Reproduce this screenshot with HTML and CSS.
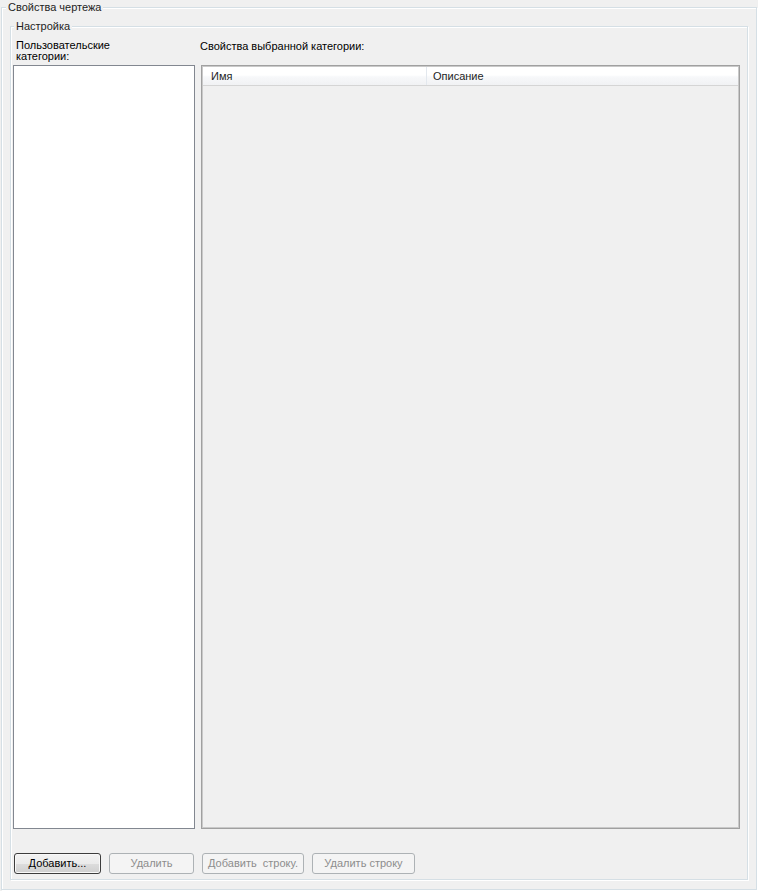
FILE: index.html
```html
<!DOCTYPE html>
<html lang="ru">
<head>
  <meta charset="UTF-8">
  <title>Свойства чертежа</title>
  <link rel="stylesheet" href="styles.css">
</head>
<body>

<fieldset class="group group-outer">
  <legend>Свойства чертежа</legend>

  <fieldset class="group group-inner">
    <legend>Настройка</legend>

    <div class="label label-categories">Пользовательские<br>категории:</div>
    <div class="label label-props">Свойства выбранной категории:</div>

    <div class="listbox"></div>

    <div class="listview">
      <div class="lv-header">
        <div class="lv-col lv-col-name">Имя</div>
        <div class="lv-col lv-col-desc">Описание</div>
      </div>
    </div>

    <div class="buttons">
      <button class="btn btn-default btn-add">Добавить...</button>
      <button class="btn btn-del" disabled>Удалить</button>
      <button class="btn btn-addrow" disabled>Добавить&nbsp; строку.</button>
      <button class="btn btn-delrow" disabled>Удалить строку</button>
    </div>
  </fieldset>
</fieldset>

</body>
</html>
```

FILE: styles.css
```css
html, body {
  margin: 0; padding: 0; height: 100%;
  background: #f0f0f0;
}
body {
  font-family: "Liberation Sans", Arial, sans-serif;
  font-size: 11px;
  color: #000;
  padding-left: 1px;
  box-sizing: border-box;
}

/* группы (etched рамка) */
.group {
  margin: 0;
  min-width: 0;
  border: 1px solid #d5dfe5;
  box-shadow: inset 1px 1px 0 #fff, 1px 1px 0 #fff;
}
.group > legend {
  padding: 0 2px;
  line-height: 14px;
  font-size: 11px;
  color: #1e1e1e;
  background: #f0f0f0;
}
.group-outer {
  box-sizing: border-box;
  width: 756px;
  height: 890px;
  padding: 5px 8px 9px 8px;
  display: flex;
  flex-direction: column;
}
.group-outer > legend { margin-left: -4px; }

.group-inner {
  flex: 1 1 auto;
  min-height: 0;
  padding: 0 7px 5px 2px;
  display: grid;
  grid-template-columns: 182px 1fr;
  grid-template-rows: 32px 1fr auto;
  column-gap: 6px;
}
.group-inner > legend { margin-left: 1px; }

/* подписи */
.label-categories {
  padding: 7px 0 0 3px;
  line-height: 11px;
}
.label-props {
  padding-top: 7px;
  margin-left: -1px;
  line-height: 13px;
}

/* списки */
.listbox {
  background: #fff;
  border: 1px solid #828790;
}
.listview {
  border: 1px solid #a0a0a0;
  box-shadow: inset 0 0 0 1px #c9c9c9;
  padding: 1px 1px 0 1px;
  background: #f0f0f0;
}
.lv-header {
  display: flex;
  height: 18px;
  padding-top: 0;
  line-height: 18px;
  background: linear-gradient(#ffffff 0%, #ffffff 45%, #f7f8fa 55%, #f1f2f4 100%);
  border-bottom: 1px solid #d5d5d5;
}
.lv-col {
  box-sizing: border-box;
  padding-left: 8px;
  color: #1e1e1e;
}
.lv-col-name {
  width: 224px;
  border-right: 1px solid #e3e8ee;
}
.lv-col-desc {
  flex: 1;
  padding-left: 6px;
}

/* кнопки */
.buttons {
  grid-column: 1 / -1;
  display: flex;
  gap: 8px;
  margin-top: 24px;
  padding-left: 1px;
}
.btn {
  box-sizing: border-box;
  height: 21px;
  padding: 0;
  font-family: "Liberation Sans", Arial, sans-serif;
  font-size: 11px;
  line-height: 19px;
  border: 1px solid #adb2b5;
  border-radius: 3px;
  background: #f4f4f4;
  color: #8d8d8d;
}
.btn-default {
  color: #000;
  border-color: #3c3c3c;
  background: linear-gradient(#f2f2f2 0%, #ebebeb 50%, #dddddd 50%, #cfcfcf 100%);
  box-shadow: inset 0 0 0 1px #f8f8f8;
}
.btn-add { width: 87px; }
.btn-del { width: 85px; }
.btn-addrow { width: 102px; }
.btn-delrow { width: 103px; }
```
